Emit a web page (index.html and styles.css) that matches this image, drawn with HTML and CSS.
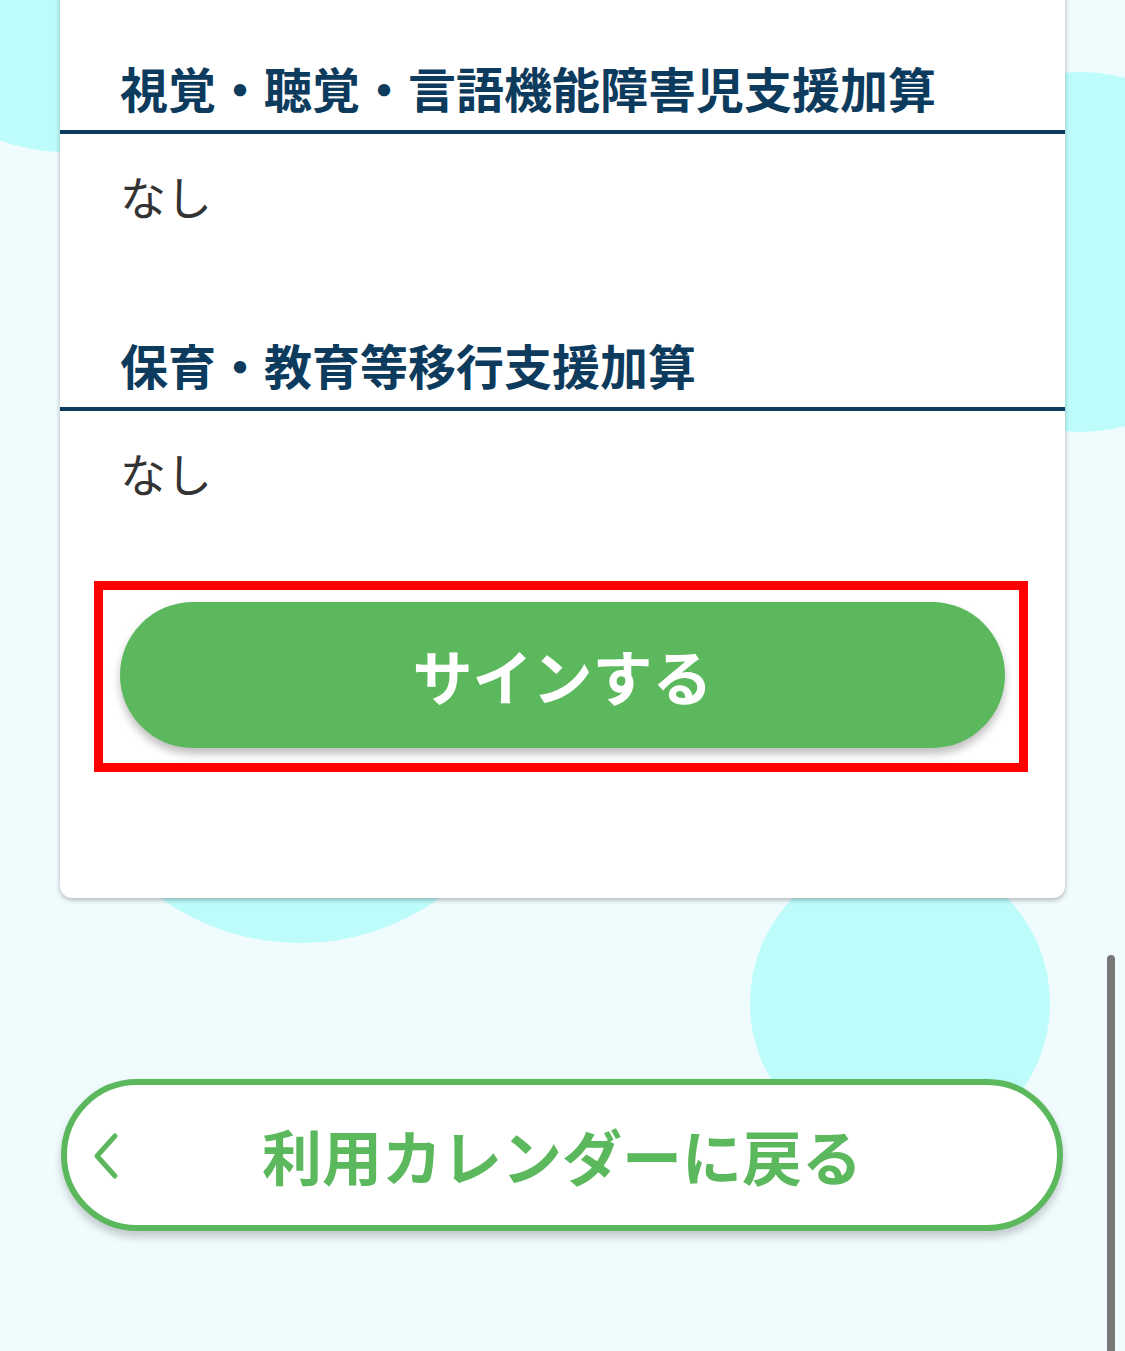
FILE: index.html
```html
<!DOCTYPE html>
<html lang="ja">
<head>
<meta charset="utf-8">
<title>加算情報</title>
<link rel="stylesheet" href="styles.css">
</head>
<body>
<div class="bg">
  <span class="circle c1"></span>
  <span class="circle c2"></span>
  <span class="circle c3"></span>
  <span class="circle c4"></span>
</div>
<main class="page">
  <section class="card">
    <div class="item">
      <h2 class="item-title">視覚・聴覚・言語機能障害児支援加算</h2>
      <p class="item-value">なし</p>
    </div>
    <div class="item item-next">
      <h2 class="item-title">保育・教育等移行支援加算</h2>
      <p class="item-value">なし</p>
    </div>
    <div class="actions">
      <div class="highlight">
        <button class="btn-sign" type="button">サインする</button>
      </div>
    </div>
  </section>
  <button class="btn-back" type="button">
    <svg class="chev" viewBox="0 0 30 48" width="30" height="48" aria-hidden="true"><path d="M24 4 L6 24 L24 44" fill="none" stroke="#5cb85c" stroke-width="5" stroke-linecap="round" stroke-linejoin="round"/></svg>
    <span>利用カレンダーに戻る</span>
  </button>
</main>
<div class="scrollbar"></div>
</body>
</html>
```

FILE: styles.css
```css
html, body {
  margin: 0;
  padding: 0;
}
body {
  width: 1125px;
  height: 1351px;
  overflow: hidden;
  position: relative;
  background: #f0fbfd;
  font-family: "Noto Sans CJK JP", "Noto Sans", sans-serif;
}
.bg {
  position: absolute;
  inset: 0;
  z-index: 0;
  overflow: hidden;
}
.circle {
  position: absolute;
  border-radius: 50%;
  background: #befcfc;
}
.c1 { left: -133px; top: -248px; width: 400px; height: 400px; }
.c2 { left: 900px; top: 72px; width: 360px; height: 360px; }
.c3 { left: 60px; top: 463px; width: 480px; height: 480px; }
.c4 { left: 750px; top: 853px; width: 300px; height: 300px; }

.page {
  position: relative;
  z-index: 1;
  display: flex;
  flex-direction: column;
}
.card {
  margin: -20px 60px 0;
  padding: 71px 0 126px;
  background: #ffffff;
  border-radius: 12px;
  box-shadow: 0 2px 5px rgba(0, 0, 0, 0.28);
}
.item-title {
  margin: 0;
  padding: 0 60px 7px;
  font-size: 48px;
  line-height: 72px;
  font-weight: 700;
  color: #0d3b5d;
  border-bottom: 4px solid #0d3b5d;
}
.item-value {
  margin: 27px 0 0;
  padding: 0 60px;
  font-size: 46px;
  line-height: 69px;
  font-weight: 400;
  color: #333333;
}
.item-next {
  margin-top: 98px;
}
.actions {
  padding: 0 60px;
}
.highlight {
  margin: 74px -23px 0 -26px;
  padding: 12px 14px 15px 17px;
  border: 9px solid #ff0000;
}
.btn-sign {
  display: block;
  width: 100%;
  height: 146px;
  border: none;
  border-radius: 73px;
  background: #5cb85c;
  color: #ffffff;
  font-family: inherit;
  font-size: 60px;
  font-weight: 700;
  line-height: 1;
  box-shadow: 0 6px 8px rgba(0, 0, 0, 0.25);
}
.btn-back {
  position: relative;
  margin: 181px 62px 0 61px;
  height: 152px;
  box-sizing: border-box;
  border: 6px solid #5cb85c;
  border-radius: 76px;
  background: #ffffff;
  color: #5cb85c;
  font-family: inherit;
  font-size: 60px;
  font-weight: 700;
  line-height: 1;
  display: flex;
  align-items: center;
  justify-content: center;
  box-shadow: 0 6px 8px rgba(0, 0, 0, 0.2);
}
.chev {
  position: absolute;
  left: 24px;
  top: 50%;
  margin-top: -23px;
}
.scrollbar {
  position: absolute;
  left: 1107px;
  top: 955px;
  width: 8px;
  bottom: 0;
  border-radius: 4px 4px 0 0;
  background: #777777;
  z-index: 2;
}
```
